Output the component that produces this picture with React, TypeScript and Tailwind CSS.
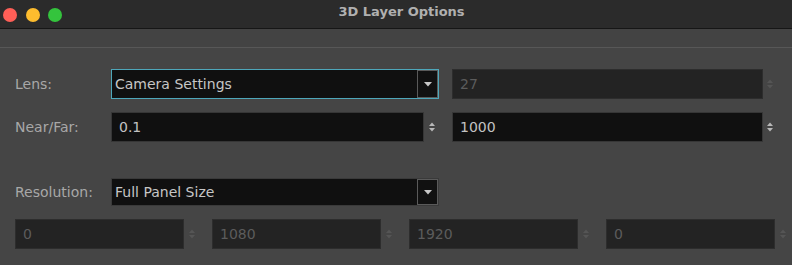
const Spinner = ({ disabled = false }: { disabled?: boolean }) => (
  <svg width="6" height="10" viewBox="0 0 6 10" className={disabled ? 'text-[#555555]' : 'text-[#b8b8b8]'}>
    <polygon points="0,4 3,0.5 6,4" fill="currentColor" />
    <polygon points="0,6 3,9.5 6,6" fill="currentColor" />
  </svg>
);

const Caret = () => (
  <svg width="8" height="5" viewBox="0 0 8 5" className="text-[#c8c8c8]">
    <polygon points="0,0 8,0 4,4.5" fill="currentColor" />
  </svg>
);

function Dropdown({ value, focused = false }: { value: string; focused?: boolean }) {
  return (
    <div
      className={`flex w-[328px] ${focused ? 'h-[30px] border-[#4ea7ba]' : 'h-[28px] border-[#3a3a3a]'} border bg-[#101010]`}
    >
      <div className="flex flex-1 items-center pl-[3px] text-[14px] text-[#c6c6c6]">{value}</div>
      <div className="flex w-[21px] items-center justify-center border border-[#5a5a5a] bg-[#111111]">
        <Caret />
      </div>
    </div>
  );
}

function NumField({
  value,
  width,
  disabled = false,
}: {
  value: string;
  width: string;
  disabled?: boolean;
}) {
  return (
    <div
      className={`flex h-[30px] items-center border pl-[7px] text-[14px] ${width} ${
        disabled ? 'border-[#2d2d2d] bg-[#232323] text-[#5c5c5c]' : 'border-[#363636] bg-[#101010] text-[#c2c2c2]'
      }`}
    >
      {value}
    </div>
  );
}

export default function App() {
  return (
    <div className="h-[265px] w-[792px] overflow-hidden bg-[#454545] font-['DejaVu_Sans',sans-serif]">
      {/* Title bar */}
      <div className="relative flex h-[29px] items-center border-b border-[#161616] bg-[#2b2b2b]">
        <div className="flex items-center gap-[8.5px] pl-[3px] pt-[1px]">
          <span className="h-[14px] w-[14px] rounded-full bg-[#fe5f57]" />
          <span className="h-[14px] w-[14px] rounded-full bg-[#fdbc2e]" />
          <span className="h-[14px] w-[14px] rounded-full bg-[#34c43d]" />
        </div>
        <div className="absolute inset-0 flex items-center justify-center pb-[5px] pl-[11px] text-[13px] font-bold text-[#b0b0b0]">
          3D Layer Options
        </div>
      </div>

      {/* Toolbar strip */}
      <div className="h-[19px] border-b border-[#575757] bg-[#434343]" />

      {/* Body */}
      <div className="flex flex-col pl-[15px] pt-[21px] text-[14px]">
        <div className="flex items-center">
          <span className="w-[96px] text-[#a8a8a8]">Lens:</span>
          <Dropdown value="Camera Settings" focused />
          <div className="ml-[13px] flex items-center">
            <NumField value="27" width="w-[311px]" disabled />
            <div className="flex w-[14px] justify-center">
              <Spinner disabled />
            </div>
          </div>
        </div>

        <div className="mt-[13px] flex items-center">
          <span className="w-[96px] text-[#a8a8a8]">Near/Far:</span>
          <NumField value="0.1" width="w-[313px]" />
          <div className="flex w-[16px] justify-center">
            <Spinner />
          </div>
          <div className="ml-[12px] flex items-center">
            <NumField value="1000" width="w-[311px]" />
            <div className="flex w-[14px] justify-center">
              <Spinner />
            </div>
          </div>
        </div>

        <div className="mt-[36px] flex items-center">
          <span className="w-[96px] text-[#a8a8a8]">Resolution:</span>
          <div className="w-[327px]">
            <Dropdown value="Full Panel Size" />
          </div>
        </div>

        <div className="mt-[13px] flex items-center gap-[12px]">
          {['0', '1080', '1920', '0'].map((v, i) => (
            <div key={i} className="flex items-center">
              <NumField value={v} width="w-[169px]" disabled />
              <div className="flex w-[16px] justify-center">
                <Spinner disabled />
              </div>
            </div>
          ))}
        </div>
      </div>
    </div>
  );
}
